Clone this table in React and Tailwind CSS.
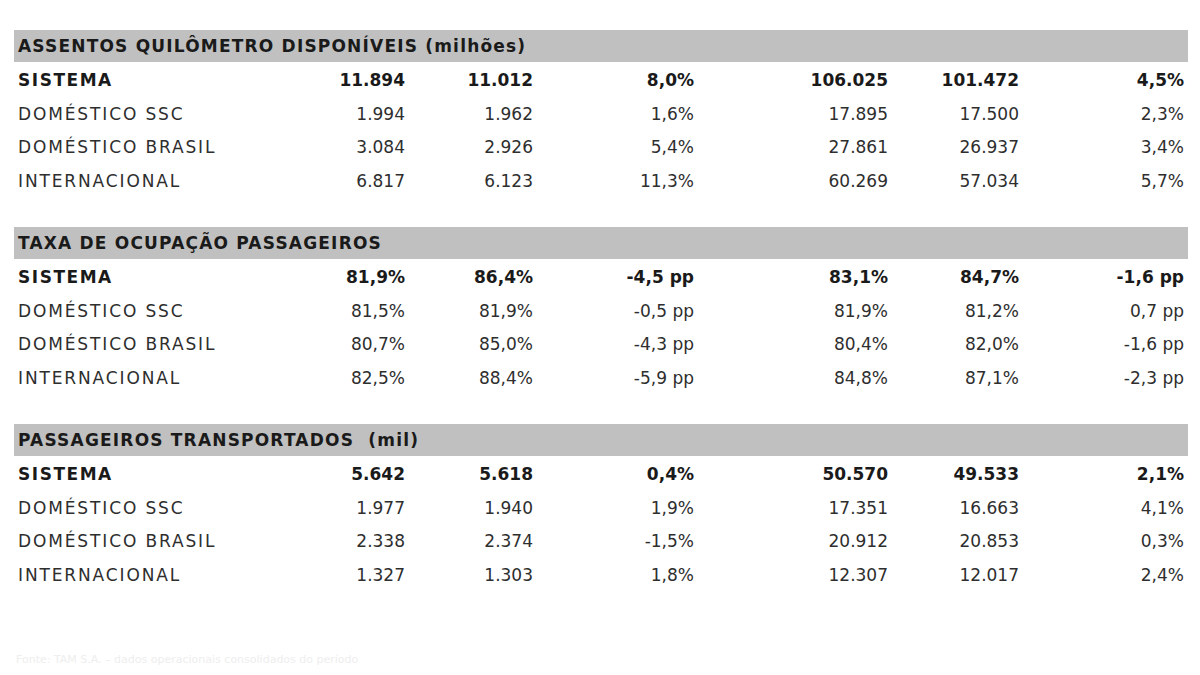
import React from 'react';

const sections = [
  {
    title: 'ASSENTOS QUILÔMETRO DISPONÍVEIS (milhões)',
    rows: [
      ['SISTEMA', '11.894', '11.012', '8,0%', '106.025', '101.472', '4,5%'],
      ['DOMÉSTICO SSC', '1.994', '1.962', '1,6%', '17.895', '17.500', '2,3%'],
      ['DOMÉSTICO BRASIL', '3.084', '2.926', '5,4%', '27.861', '26.937', '3,4%'],
      ['INTERNACIONAL', '6.817', '6.123', '11,3%', '60.269', '57.034', '5,7%'],
    ],
  },
  {
    title: 'TAXA DE OCUPAÇÃO PASSAGEIROS',
    rows: [
      ['SISTEMA', '81,9%', '86,4%', '-4,5 pp', '83,1%', '84,7%', '-1,6 pp'],
      ['DOMÉSTICO SSC', '81,5%', '81,9%', '-0,5 pp', '81,9%', '81,2%', '0,7 pp'],
      ['DOMÉSTICO BRASIL', '80,7%', '85,0%', '-4,3 pp', '80,4%', '82,0%', '-1,6 pp'],
      ['INTERNACIONAL', '82,5%', '88,4%', '-5,9 pp', '84,8%', '87,1%', '-2,3 pp'],
    ],
  },
  {
    title: 'PASSAGEIROS TRANSPORTADOS  (mil)',
    rows: [
      ['SISTEMA', '5.642', '5.618', '0,4%', '50.570', '49.533', '2,1%'],
      ['DOMÉSTICO SSC', '1.977', '1.940', '1,9%', '17.351', '16.663', '4,1%'],
      ['DOMÉSTICO BRASIL', '2.338', '2.374', '-1,5%', '20.912', '20.853', '0,3%'],
      ['INTERNACIONAL', '1.327', '1.303', '1,8%', '12.307', '12.017', '2,4%'],
    ],
  },
];

const Row = ({ cells, bold }) => (
  <div
    className={`grid grid-cols-[300px_87px_128px_161px_194px_131px_165px] h-[33.5px] items-center px-[4px] ${
      bold ? 'font-bold text-[#1a1a1a]' : 'text-[#2e2e2e]'
    }`}
  >
    <span className={`whitespace-nowrap ${bold ? 'tracking-[0.09em]' : 'tracking-[0.11em]'}`}>{cells[0]}</span>
    {cells.slice(1).map((c, i) => (
      <span key={i} className="text-right whitespace-nowrap">
        {c}
      </span>
    ))}
  </div>
);

export default function App() {
  return (
    <div className="w-[1200px] h-[675px] bg-white overflow-hidden font-['DejaVu_Sans',Verdana,sans-serif] text-[17px] leading-none">
      <div className="pt-[30px] pl-[14px] w-[1188px] flex flex-col gap-[29px]">
        {sections.map(s => (
          <div key={s.title}>
            {/* section band */}
            <div className="h-[32px] bg-[#c0c0c0] flex items-center px-[4px] font-bold text-[#1a1a1a] tracking-[0.07em] whitespace-pre">
              {s.title}
            </div>
            <div className="pt-[2px]">
              {s.rows.map((r, i) => (
                <Row key={r[0]} cells={r} bold={i === 0} />
              ))}
            </div>
          </div>
        ))}
      </div>
      <div className="mt-[62px] ml-[16px] text-[11px] text-[#eeeeee] whitespace-nowrap">
        Fonte: TAM S.A. – dados operacionais consolidados do período
      </div>
    </div>
  );
}
